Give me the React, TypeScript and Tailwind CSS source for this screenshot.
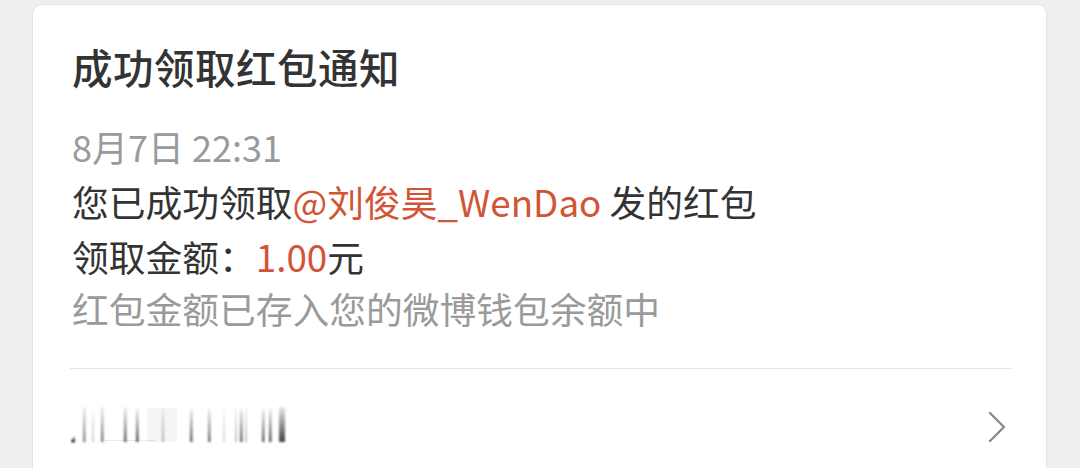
import React from "react";

const bars: { x: number; w: number; top: number; o: number }[] = [
  { x: 73, w: 2, top: 440, o: 0.85 },
  { x: 83, w: 2.5, top: 411, o: 0.5 },
  { x: 92, w: 2, top: 413, o: 0.2 },
  { x: 101, w: 2.5, top: 411, o: 0.55 },
  { x: 124, w: 2.5, top: 411, o: 0.65 },
  { x: 136, w: 2.5, top: 413, o: 0.7 },
  { x: 162, w: 2, top: 411, o: 0.3 },
  { x: 190, w: 2.5, top: 413, o: 0.65 },
  { x: 208, w: 2.5, top: 413, o: 0.6 },
  { x: 223, w: 2, top: 413, o: 0.18 },
  { x: 235, w: 2, top: 411, o: 0.25 },
  { x: 240, w: 2.5, top: 413, o: 0.65 },
  { x: 245, w: 2, top: 411, o: 0.25 },
  { x: 262, w: 2.5, top: 413, o: 0.65 },
  { x: 269, w: 2.5, top: 413, o: 0.7 },
  { x: 279, w: 6, top: 411, o: 0.75 },
];

function Censored() {
  const ox = 70;
  const oy = 408;
  return (
    <svg width="220" height="40" viewBox="0 0 220 40">
      <defs>
        <linearGradient id="g" x1="0" y1="0" x2="0" y2="1">
          <stop offset="0" stopColor="#000" stopOpacity="0.12" />
          <stop offset="1" stopColor="#000" stopOpacity="1" />
        </linearGradient>
        <filter id="b" x="-50%" y="-20%" width="200%" height="140%">
          <feGaussianBlur stdDeviation="1" />
        </filter>
      </defs>
      <rect x={147 - ox} y={412 - oy} width="30" height="34" fill="#000" opacity="0.04" />
      <rect x={105 - ox} y={444 - oy} width="50" height="1" fill="#000" opacity="0.08" />
      <g filter="url(#b)">
        {bars.map((b, i) => (
          <rect
            key={i}
            x={b.x - ox}
            y={b.top - oy}
            width={b.w}
            height={446 - b.top}
            fill="url(#g)"
            opacity={b.o}
          />
        ))}
        <circle cx={73 - ox} cy={445 - oy} r="1.8" fill="#222" />
      </g>
    </svg>
  );
}

export default function App() {
  return (
    <div
      className="w-[1080px] h-[468px] overflow-hidden bg-[#efefef]"
      style={{ fontFamily: '"Noto Sans CJK SC", "Noto Sans", sans-serif' }}
    >
      <div className="ml-[32px] mt-[4px] w-[1015px] h-[480px] rounded-t-[10px] bg-white border border-[#e4e4e4] pt-[34px] pl-[39px] pr-[34px]">
        <div className="h-[56px] leading-[56px] text-[40.5px] font-medium text-[#333333] tracking-[0.5px]">
          成功领取红包通知
        </div>
        <div className="mt-[23px] h-[56px] leading-[56px] text-[36px] text-[#9a9a9a]">
          8月7日 22:31
        </div>
        <div className="h-[55px] leading-[55px] text-[36.75px] text-[#333333]">
          您已成功领取<span className="text-[#d35434]">@刘俊昊_WenDao</span> 发的红包
        </div>
        <div className="h-[52px] leading-[55px] text-[36.75px] text-[#333333]">
          领取金额：<span className="text-[#d35434]">1.00</span>元
        </div>
        <div className="h-[55px] leading-[55px] text-[36.75px] text-[#9a9a9a]">
          红包金额已存入您的微博钱包余额中
        </div>
        <div className="mt-[32px] h-px bg-[#e6e6e6] -ml-[2px]" />
        <div className="h-[112px] flex items-center justify-between -ml-[2px]">
          <div className="-mt-[2px]">
            <Censored />
          </div>
          <svg width="20" height="34" viewBox="0 0 20 34" className="mr-[5px] mt-[4px]">
            <path d="M3 3 L17 17 L3 31" fill="none" stroke="#8a8a8a" strokeWidth="2.4" strokeLinecap="round" strokeLinejoin="round" />
          </svg>
        </div>
      </div>
    </div>
  );
}
